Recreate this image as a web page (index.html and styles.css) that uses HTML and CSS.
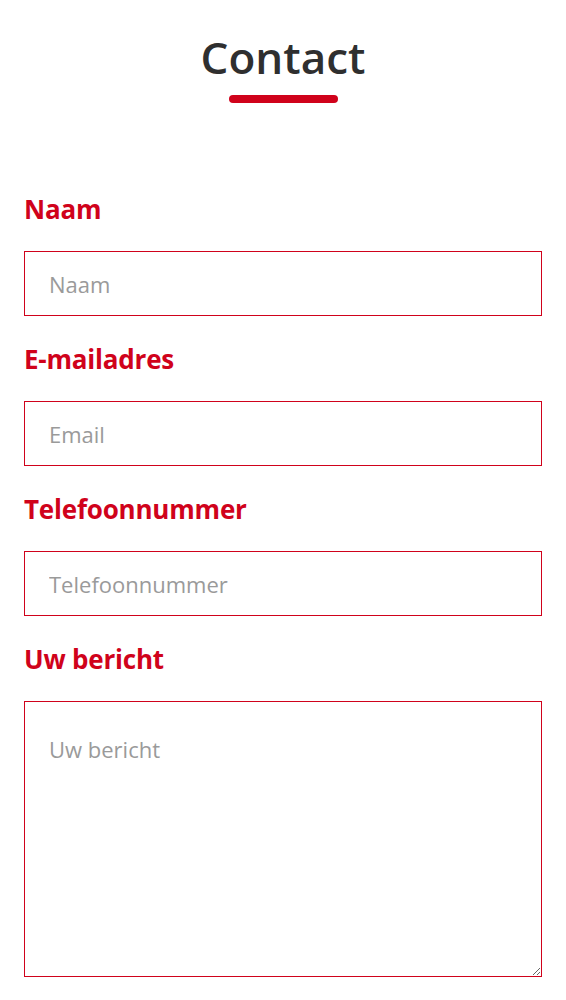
FILE: index.html
```html
<!DOCTYPE html>
<html lang="nl">
<head>
<meta charset="utf-8">
<title>Contact</title>
<link rel="stylesheet" href="styles.css">
</head>
<body>
<main class="page">
  <header class="head">
    <h1 class="title">Contact</h1>
    <span class="bar"></span>
  </header>
  <form class="form">
    <div class="field">
      <label class="label" for="naam">Naam</label>
      <input class="input" id="naam" type="text" placeholder="Naam">
    </div>
    <div class="field">
      <label class="label" for="email">E-mailadres</label>
      <input class="input" id="email" type="email" placeholder="Email">
    </div>
    <div class="field">
      <label class="label" for="tel">Telefoonnummer</label>
      <input class="input" id="tel" type="tel" placeholder="Telefoonnummer">
    </div>
    <div class="field">
      <label class="label" for="msg">Uw bericht</label>
      <textarea class="input area" id="msg" placeholder="Uw bericht"></textarea>
    </div>
  </form>
</main>
</body>
</html>
```
FILE: styles.css
```css
* { box-sizing: border-box; }
html, body { margin: 0; padding: 0; background: #fff; }
body { font-family: "Open Sans", "Noto Sans", sans-serif; }
.page { padding: 0 24px; }
.head { display: flex; flex-direction: column; align-items: center; padding-top: 28px; }
.title { margin: 0; font-size: 44px; line-height: 58px; font-weight: 600; color: #2f2f2f; letter-spacing: 0; }
.bar { display: block; width: 109px; height: 8px; border-radius: 4px; background: #d0021b; margin-top: 9px; }
.form { display: flex; flex-direction: column; gap: 28px; margin-top: 91px; }
.field { display: flex; flex-direction: column; gap: 27px; }
.label { font-size: 26px; line-height: 30px; font-weight: 700; color: #d0021b; letter-spacing: -0.2px; }
.input { width: 100%; height: 65px; border: 1px solid #d0021b; border-radius: 0; padding: 0 24px; font-family: inherit; font-size: 22px; color: #333; background: #fff; outline: none; }
.input::placeholder { color: #9a9a9a; }
.area { height: 276px; padding-top: 32px; resize: vertical; display: block; }
```
